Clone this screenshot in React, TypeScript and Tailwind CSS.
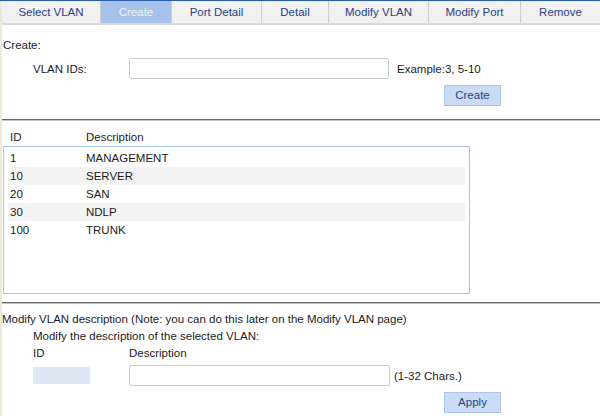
import React from "react";
import clsx from "clsx";

const tabs = [
  { label: "Select VLAN", w: "w-[99px]" },
  { label: "Create", w: "w-[71px]", active: true },
  { label: "Port Detail", w: "w-[90px]" },
  { label: "Detail", w: "w-[67px]" },
  { label: "Modify VLAN", w: "w-[100px]" },
  { label: "Modify Port", w: "w-[92px]" },
  { label: "Remove", w: "w-[79px]", last: true },
];

const vlans = [
  { id: "1", desc: "MANAGEMENT" },
  { id: "10", desc: "SERVER" },
  { id: "20", desc: "SAN" },
  { id: "30", desc: "NDLP" },
  { id: "100", desc: "TRUNK" },
];

function Separator() {
  return (
    <div>
      <div className="h-[1px] bg-[#666666]" />
      <div className="h-[1px] bg-[#c4c4c4]" />
    </div>
  );
}

function Button({ label, className }: { label: string; className?: string }) {
  return (
    <button
      type="button"
      className={clsx(
        "w-[57px] h-[21px] bg-[#c9dbf5] border border-[#a9c3ea] text-[#2a3f85] text-[11.5px] leading-none",
        className
      )}
    >
      {label}
    </button>
  );
}

export default function App() {
  return (
    <div
      className="w-[600px] h-[416px] bg-white overflow-hidden border-t border-[#2b5ca8] flex text-[11.5px] leading-[14px] text-[#1c1c1c]"
      style={{ fontFamily: '"Liberation Sans", Arial, sans-serif' }}
    >
      <div className="w-[2px] bg-[#ece9d8] shrink-0" />
      <div className="flex-1 flex flex-col">
        {/* tabs */}
        <div className="flex h-[24px] bg-[#f1f1f1] border-b-2 border-[#d9d9d9]">
          {tabs.map((t) => (
            <div
              key={t.label}
              className={clsx(
                "h-full flex items-center justify-center text-[#2a3f85]",
                t.w,
                !t.last && "border-r border-[#cfcfcf]",
                t.active && "bg-[#a7c2ea] text-[#eef3fb]"
              )}
            >
              {t.label}
            </div>
          ))}
        </div>

        {/* create */}
        <div className="pt-[13px]">
          <div className="pl-[1px]">Create:</div>
          <div className="mt-[6px] flex items-center h-[21px]">
            <div className="w-[127px] pl-[31px]">VLAN IDs:</div>
            <input className="w-[260px] h-[21px] border border-[#cccccc] rounded-[2px] bg-white outline-none" />
            <span className="ml-[8px]">Example:3, 5-10</span>
          </div>
          <div className="mt-[6px] pl-[442px]">
            <Button label="Create" />
          </div>
        </div>

        <div className="mt-[13px]">
          <Separator />
        </div>

        {/* list */}
        <div className="mt-[9px] flex pl-[8px]">
          <div className="w-[76px]">ID</div>
          <div>Description</div>
        </div>
        <div className="mt-[2px] ml-[1px] w-[467px] h-[148px] border border-[#a9c4ea] px-[4px] pt-[2px]">
          {vlans.map((v, i) => (
            <div
              key={v.id}
              className={clsx("h-[18px] flex items-center pl-[2px]", i % 2 === 1 && "bg-[#f4f4f4]")}
            >
              <div className="w-[76px]">{v.id}</div>
              <div>{v.desc}</div>
            </div>
          ))}
        </div>

        <div className="mt-[8px]">
          <Separator />
        </div>

        {/* modify */}
        <div className="mt-[8px]">Modify VLAN description (Note: you can do this later on the Modify VLAN page)</div>
        <div className="mt-[3px] pl-[31px]">Modify the description of the selected VLAN:</div>
        <div className="mt-[3px] flex">
          <div className="w-[127px] pl-[31px]">ID</div>
          <div>Description</div>
        </div>
        <div className="mt-[5px] flex items-center h-[21px]">
          <div className="w-[127px] pl-[31px]">
            <div className="w-[57px] h-[17px] bg-[#dfe7f3]" />
          </div>
          <input className="w-[261px] h-[21px] border border-[#cccccc] rounded-[2px] bg-white outline-none" />
          <span className="ml-[4px]">(1-32 Chars.)</span>
        </div>
        <div className="mt-[6px] pl-[442px]">
          <Button label="Apply" />
        </div>
      </div>
    </div>
  );
}
